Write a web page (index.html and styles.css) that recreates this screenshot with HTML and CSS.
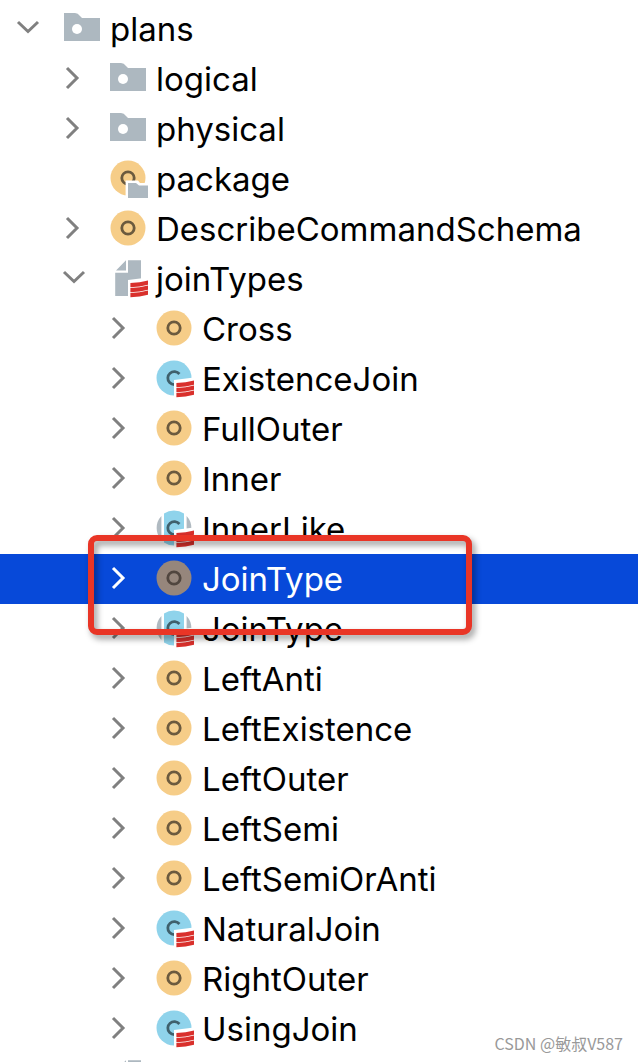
FILE: index.html
```html
<!DOCTYPE html>
<html lang="en">
<head>
  <meta charset="UTF-8" />
  <meta name="viewport" content="width=device-width, initial-scale=1" />
  <title>plans</title>
  <link rel="stylesheet" href="styles.css">
</head>
<body>

  <!-- Icon set -->
  <svg class="sprite" aria-hidden="true">
    <symbol id="down" viewBox="0 0 40 40">
      <path d="M10 14 L20 23.500 L30 14" fill="none" stroke="currentColor" stroke-width="3" />
    </symbol>
    <symbol id="right" viewBox="0 0 40 40">
      <path d="M13 10 L23 20 L13 30" fill="none" stroke="currentColor" stroke-width="3" />
    </symbol>
    <symbol id="folder" viewBox="0 0 40 40">
      <path d="M2 5 H13 Q16 5 18 8 L20 10 H38 V33 H2 Z" fill="#adb8c0" />
      <circle cx="15" cy="21" r="5" fill="#fff" />
    </symbol>
    <symbol id="scala" viewBox="0 0 40 40">
      <path d="M20 22 L40 19.500 V40 H20 Z" fill="#fff" />
      <path d="M22.400 25 Q32 25 40 22.600 V26.800 Q32 29 22.400 29.200 Z
               M22.400 30 Q32 30 40 27.600 V31.800 Q32 34 22.400 34.200 Z
               M22.400 35 Q32 35 40 32.600 V36.800 Q32 39 22.400 39.200 Z" fill="#d9302c" />
    </symbol>
    <symbol id="object" viewBox="0 0 40 40">
      <circle cx="20" cy="20" r="17.500" class="disc" />
      <circle cx="20" cy="20" r="6.200" class="ring" />
    </symbol>
    <symbol id="package" viewBox="0 0 40 40">
      <use href="#object" />
      <path d="M17.600 22.500 H30 L32 25 H40 V40 H17.600 Z" fill="#fff" />
      <path d="M20 25 H28 L31 27.400 H40 V40 H20 Z" fill="#adb8c0" />
    </symbol>
    <symbol id="class" viewBox="0 0 40 40">
      <circle cx="20" cy="20" r="17.500" fill="#8fd3eb" />
      <path d="M25.400 16 A6.500 6.500 0 1 0 25 24.600" class="letter" />
      <use href="#scala" />
    </symbol>
    <symbol id="abstract" viewBox="0 0 40 40">
      <path d="M7.400 8 V32 A17.500 17.500 0 0 1 7.400 8 Z M32.600 8 V32 A17.500 17.500 0 0 0 32.600 8 Z" fill="#b0bac1" />
      <path d="M10 5.600 A17.500 17.500 0 0 1 30 5.600 V34.400 A17.500 17.500 0 0 1 10 34.400 Z" fill="#8fd3eb" />
      <path d="M25.400 16 A6.500 6.500 0 1 0 25 24.600" class="letter" />
      <use href="#scala" />
    </symbol>
    <symbol id="file" viewBox="0 0 40 40">
      <path d="M8 12.400 L18 2.200 V12.400 Z M20 2.200 H33 V38 H7.200 V14.800 H20 Z" fill="#adb8c0" />
      <use href="#scala" />
    </symbol>
  </svg>

  <ul class="tree">
    <li class="row">
      <button class="toggle" aria-label="Collapse plans"><svg><use href="#down" /></svg></button>
      <svg class="icon"><use href="#folder" /></svg>
      <span class="name">plans</span>
    </li>
    <li class="row level-1">
      <button class="toggle" aria-label="Expand logical"><svg><use href="#right" /></svg></button>
      <svg class="icon"><use href="#folder" /></svg>
      <span class="name">logical</span>
    </li>
    <li class="row level-1">
      <button class="toggle" aria-label="Expand physical"><svg><use href="#right" /></svg></button>
      <svg class="icon"><use href="#folder" /></svg>
      <span class="name">physical</span>
    </li>
    <li class="row level-1">
      <span class="toggle"></span>
      <svg class="icon"><use href="#package" /></svg>
      <span class="name">package</span>
    </li>
    <li class="row level-1">
      <button class="toggle" aria-label="Expand DescribeCommandSchema"><svg><use href="#right" /></svg></button>
      <svg class="icon"><use href="#object" /></svg>
      <span class="name">DescribeCommandSchema</span>
    </li>
    <li class="row level-1">
      <button class="toggle" aria-label="Collapse joinTypes"><svg><use href="#down" /></svg></button>
      <svg class="icon"><use href="#file" /></svg>
      <span class="name">joinTypes</span>
    </li>

    <!-- joinTypes members -->
    <li class="row level-2">
      <button class="toggle" aria-label="Expand Cross"><svg><use href="#right" /></svg></button>
      <svg class="icon"><use href="#object" /></svg>
      <span class="name">Cross</span>
    </li>
    <li class="row level-2">
      <button class="toggle" aria-label="Expand ExistenceJoin"><svg><use href="#right" /></svg></button>
      <svg class="icon"><use href="#class" /></svg>
      <span class="name">ExistenceJoin</span>
    </li>
    <li class="row level-2">
      <button class="toggle" aria-label="Expand FullOuter"><svg><use href="#right" /></svg></button>
      <svg class="icon"><use href="#object" /></svg>
      <span class="name">FullOuter</span>
    </li>
    <li class="row level-2">
      <button class="toggle" aria-label="Expand Inner"><svg><use href="#right" /></svg></button>
      <svg class="icon"><use href="#object" /></svg>
      <span class="name">Inner</span>
    </li>
    <li class="row level-2">
      <button class="toggle" aria-label="Expand InnerLike"><svg><use href="#right" /></svg></button>
      <svg class="icon"><use href="#abstract" /></svg>
      <span class="name">InnerLike</span>
    </li>
    <li class="row level-2 selected">
      <button class="toggle" aria-label="Expand JoinType object"><svg><use href="#right" /></svg></button>
      <svg class="icon"><use href="#object" /></svg>
      <span class="name">JoinType</span>
      <div class="marker"></div>
    </li>
    <li class="row level-2">
      <button class="toggle" aria-label="Expand JoinType class"><svg><use href="#right" /></svg></button>
      <svg class="icon"><use href="#abstract" /></svg>
      <span class="name">JoinType</span>
    </li>
    <li class="row level-2">
      <button class="toggle" aria-label="Expand LeftAnti"><svg><use href="#right" /></svg></button>
      <svg class="icon"><use href="#object" /></svg>
      <span class="name">LeftAnti</span>
    </li>
    <li class="row level-2">
      <button class="toggle" aria-label="Expand LeftExistence"><svg><use href="#right" /></svg></button>
      <svg class="icon"><use href="#object" /></svg>
      <span class="name">LeftExistence</span>
    </li>
    <li class="row level-2">
      <button class="toggle" aria-label="Expand LeftOuter"><svg><use href="#right" /></svg></button>
      <svg class="icon"><use href="#object" /></svg>
      <span class="name">LeftOuter</span>
    </li>
    <li class="row level-2">
      <button class="toggle" aria-label="Expand LeftSemi"><svg><use href="#right" /></svg></button>
      <svg class="icon"><use href="#object" /></svg>
      <span class="name">LeftSemi</span>
    </li>
    <li class="row level-2">
      <button class="toggle" aria-label="Expand LeftSemiOrAnti"><svg><use href="#right" /></svg></button>
      <svg class="icon"><use href="#object" /></svg>
      <span class="name">LeftSemiOrAnti</span>
    </li>
    <li class="row level-2">
      <button class="toggle" aria-label="Expand NaturalJoin"><svg><use href="#right" /></svg></button>
      <svg class="icon"><use href="#class" /></svg>
      <span class="name">NaturalJoin</span>
    </li>
    <li class="row level-2">
      <button class="toggle" aria-label="Expand RightOuter"><svg><use href="#right" /></svg></button>
      <svg class="icon"><use href="#object" /></svg>
      <span class="name">RightOuter</span>
    </li>
    <li class="row level-2">
      <button class="toggle" aria-label="Expand UsingJoin"><svg><use href="#right" /></svg></button>
      <svg class="icon"><use href="#class" /></svg>
      <span class="name">UsingJoin</span>
    </li>
    <li class="row level-1">
      <span class="toggle"></span>
      <svg class="icon"><use href="#file" /></svg>
    </li>
  </ul>

  <div class="watermark">CSDN @敏叔V587</div>

</body>
</html>
```
FILE: styles.css
```css
body {
  margin: 0;
  height: 100vh;
  overflow: hidden;
  position: relative;
  background-color: #ffffff;
  color: #000;
  font-family: Inter, "Noto Sans", sans-serif;
}

.sprite {
  position: absolute;
  width: 0;
  height: 0;
}

.tree {
  list-style: none;
  margin: 0;
  padding: 4px 0 0;
}

.row {
  display: flex;
  align-items: center;
  height: 50px;
  padding-left: 8px;
  box-sizing: border-box;
}

.level-1 {
  padding-left: 54px;
}

.level-2 {
  padding-left: 100px;
}

.toggle {
  width: 40px;
  height: 40px;
  margin: 0 14px 2px 0;
  padding: 0;
  border: none;
  background: none;
  color: #808080;
  flex-shrink: 0;
  cursor: pointer;
}

.toggle svg {
  display: block;
  width: 40px;
  height: 40px;
}

.icon {
  width: 40px;
  height: 40px;
  margin: 0 8px 2px 0;
  flex-shrink: 0;
}

.name {
  font-size: 33px;
  line-height: 50px;
  white-space: nowrap;
}

.disc {
  fill: var(--disc, #f6cd88);
}

.ring {
  fill: none;
  stroke: var(--ring, #6b5a3e);
  stroke-width: 2.8;
}

.letter {
  fill: none;
  stroke: #3f606c;
  stroke-width: 2.8;
}

.selected {
  --disc: #96867c;
  --ring: #51463f;
  position: relative;
  background-color: #0749d9;
  color: #fff;
}

.selected .toggle {
  color: #fff;
}

/* red frame around the selected row */
.marker {
  position: absolute;
  z-index: 2;
  top: -19px;
  left: 88px;
  width: 384px;
  height: 100px;
  box-sizing: border-box;
  border: 6px solid #e93526;
  border-radius: 9px;
  filter: drop-shadow(3px 4px 3px rgba(0, 0, 0, 0.4));
  pointer-events: none;
}

.watermark {
  position: absolute;
  right: 15px;
  bottom: 7px;
  font-family: "Noto Sans CJK SC", sans-serif;
  font-size: 16px;
  line-height: 24px;
  color: #999;
}
```
